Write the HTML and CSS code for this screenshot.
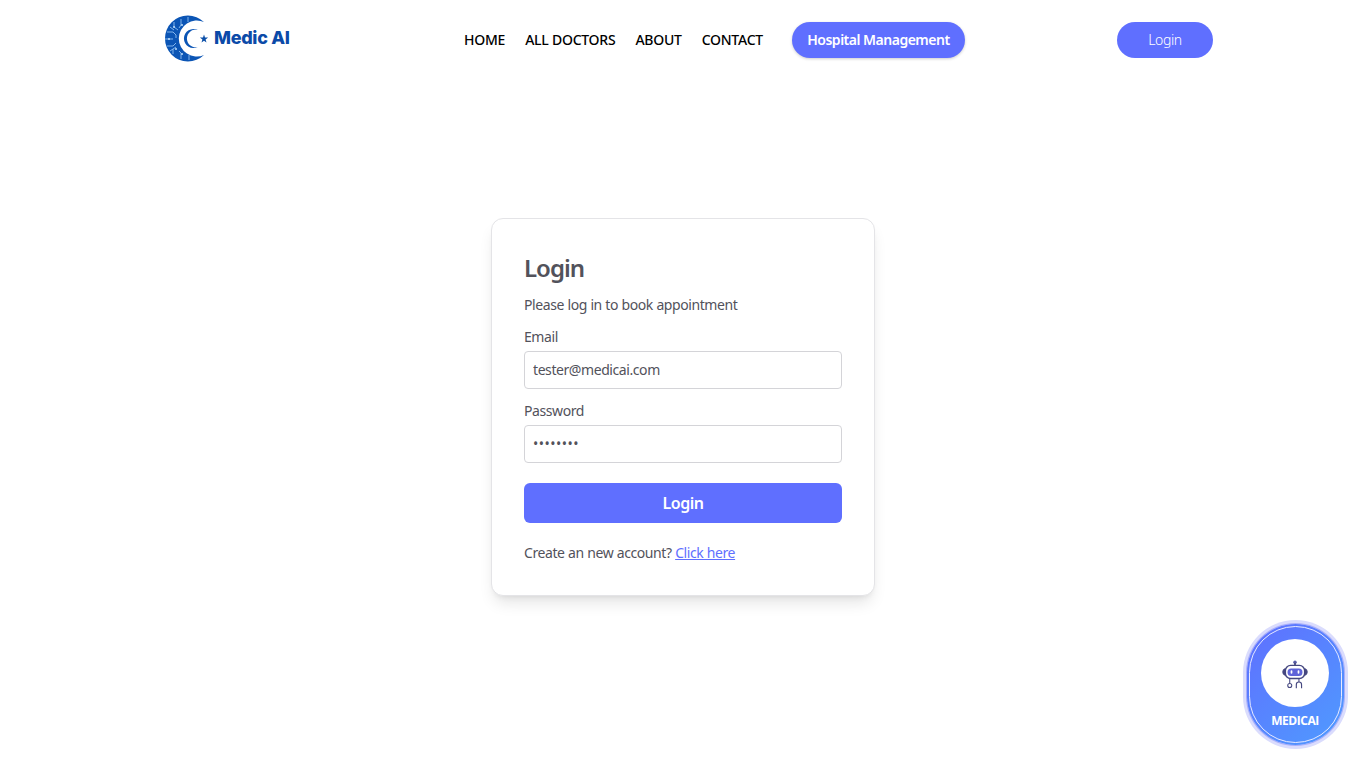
FILE: index.html
```html
<!DOCTYPE html>
<html lang="en">
<head>
<meta charset="utf-8">
<title>Medic AI</title>
<link rel="stylesheet" href="styles.css">
</head>
<body>
<header class="header">
  <a class="brand" href="#">
    <svg class="brand-mark" viewBox="0 0 46 46" width="46" height="46" aria-hidden="true">
      <path d="M40 6A23 23 0 1 0 40 39A18 18 0 1 1 40 6Z" fill="#0b55b5"/>
      <path d="M3 16h6l3 3v3M1 23h8M3 30h6l3-3M10 6v5l4 3M17 3v6l-2 3M9 38v-5l3-2M17 43v-6l-2-2M24 1v5M25 44v-5M6 11l4 3M6 35l3-2" stroke="#8fc0f2" stroke-width=".9" fill="none"/>
      <circle cx="10" cy="11" r="1" fill="#bcdcfa"/><circle cx="5" cy="23" r="1" fill="#bcdcfa"/><circle cx="12" cy="33" r="1" fill="#bcdcfa"/><circle cx="18" cy="9" r="1" fill="#bcdcfa"/><circle cx="18" cy="38" r="1" fill="#bcdcfa"/>
      <path d="M34 14A9.600 9.600 0 1 0 34 31A8.800 8.800 0 1 1 34 14Z" fill="#0b55b5"/>
      <path d="M40 18.500l1 3 3.100.1-2.500 1.900.9 3-2.500-1.800-2.500 1.800.9-3-2.500-1.900 3.100-.1z" fill="#0b4fa8"/>
    </svg>
    <span class="brand-name">Medic AI</span>
  </a>
  <nav class="nav">
    <a class="nav-link" href="#">HOME</a>
    <a class="nav-link" href="#">ALL DOCTORS</a>
    <a class="nav-link" href="#">ABOUT</a>
    <a class="nav-link" href="#">CONTACT</a>
    <a class="pill pill-strong" href="#">Hospital Management</a>
  </nav>
  <a class="pill pill-login" href="#">Login</a>
</header>
<main class="page">
  <form class="card">
    <h1 class="title">Login</h1>
    <p class="lead">Please log in to book appointment</p>
    <label class="field">
      <span>Email</span>
      <input type="email" value="tester@medicai.com">
    </label>
    <label class="field">
      <span>Password</span>
      <input class="secret" type="password" value="12345678">
    </label>
    <button class="submit" type="button">Login</button>
    <p class="switch">Create an new account? <a href="#">Click here</a></p>
  </form>
</main>
<aside class="bot">
  <div class="bot-inner">
    <div class="bot-line">
      <div class="bot-disc">
        <svg class="bot-icon" viewBox="0 0 32 34" width="28" height="30" aria-hidden="true">
          <circle cx="16" cy="2.500" r="2" fill="#5b5fa8"/>
          <path d="M16 3v3" stroke="#45477f" stroke-width="2"/>
          <rect x="5" y="6" width="22" height="15" rx="6" fill="#fff" stroke="#45477f" stroke-width="1.600"/>
          <rect x="7.500" y="9.500" width="17" height="8.500" rx="4" fill="#5f63d8"/>
          <rect x="11" y="11.500" width="2" height="4" rx="1" fill="#fff"/>
          <rect x="19" y="11.500" width="2" height="4" rx="1" fill="#fff"/>
          <path d="M5 9.500a4 4 0 0 0-3 4a4 4 0 0 0 3 4M27 9.500a4 4 0 0 1 3 4a4 4 0 0 1-3 4" fill="#45477f" stroke="#45477f"/>
          <path d="M10 21v5M12 21h8" stroke="#45477f" stroke-width="1.200" fill="none"/>
          <path d="M17.500 32v-4a3 3 0 0 1 6 0v4" stroke="#45477f" stroke-width="1.300" fill="none"/>
          <path d="M20.500 21v4" stroke="#45477f" stroke-width="1.200"/>
          <circle cx="10" cy="29" r="2.300" fill="#fff" stroke="#45477f" stroke-width="1.200"/>
        </svg>
      </div>
      <span class="bot-label">MEDICAI</span>
    </div>
  </div>
</aside>
</body>
</html>
```
FILE: styles.css
```css
* { box-sizing: border-box; }
html, body { margin: 0; padding: 0; height: 100%; }
body {
  background: #fff;
  font-family: "Noto Sans", "Open Sans", sans-serif;
  color: #000;
  overflow: hidden;
}
a { text-decoration: none; color: inherit; }

.header {
  display: flex;
  align-items: center;
  justify-content: space-between;
  height: 80px;
  margin: 0 153px 0 165px;
}
.brand { display: flex; align-items: center; gap: 4px; width: 147px; margin-top: -2px; }
.brand-mark { display: block; flex: none; overflow: visible; margin-left: -1px; }
.brand-name {
  font-family: Inter, sans-serif;
  font-size: 18px;
  font-weight: 800;
  color: #0b4aa8;
  letter-spacing: -0.3px;
  white-space: nowrap;
  margin-top: -3px;
}
.nav {
  display: flex;
  align-items: center;
  gap: 20px;
  font-size: 14px;
  font-weight: 500;
  letter-spacing: -0.25px;
}
.nav-link { margin-top: -2px; }
.pill {
  display: flex;
  align-items: center;
  justify-content: center;
  height: 36px;
  padding-bottom: 2px;
  border-radius: 18px;
  background: #5f6fff;
  color: #fff;
  font-size: 14px;
}
.pill-strong {
  width: 173px;
  margin-left: 9px;
  font-weight: 600;
  letter-spacing: -0.5px;
  box-shadow: 0 1px 3px rgba(0,0,0,.2);
}
.pill-login { width: 96px; font-weight: 300; letter-spacing: -0.35px; }

.page {
  display: flex;
  justify-content: center;
  padding-top: 138px;
}
.card {
  width: 384px;
  height: 378px;
  padding: 32px;
  background: #fff;
  border: 1px solid #e4e4e7;
  border-radius: 12px;
  box-shadow: 0 10px 15px -3px rgba(0,0,0,.1), 0 4px 6px -4px rgba(0,0,0,.1);
  color: #52525b;
  font-size: 14px;
  letter-spacing: -0.42px;
  word-spacing: 0.3px;
}
.title { margin: 0 0 11px; font-size: 24px; line-height: 33px; font-weight: 600; color: #52525b; letter-spacing: -1px; }
.lead { margin: 0 0 12px; line-height: 20px; }
.field { display: block; margin-bottom: 12px; }
.field span { display: block; line-height: 20px; margin-bottom: 4px; }
.field input {
  display: block;
  width: 100%;
  height: 38px;
  padding: 0 8px 1px;
  border: 1px solid #d4d4d8;
  border-radius: 4px;
  background: #fff;
  color: #52525b;
  font: inherit;
  letter-spacing: inherit;
  word-spacing: inherit;
  outline: none;
}
.field .secret { letter-spacing: 0.5px; }
.submit {
  display: block;
  width: 100%;
  height: 40px;
  margin-top: 20px;
  border: 0;
  border-radius: 6px;
  background: #5f6fff;
  color: #fff;
  font: 600 16px "Noto Sans", sans-serif;
  letter-spacing: -0.45px;
}
.switch { margin: 20px 0 0; line-height: 20px; }
.switch a { color: #5f6fff; text-decoration: underline; }

.bot {
  position: fixed;
  left: 1243px;
  top: 620px;
  width: 105px;
  height: 129px;
  padding: 4px;
  border-radius: 53px;
  background: #dadcfd;
}
.bot-inner {
  height: 100%;
  padding: 2px;
  border-radius: 49px;
  background: linear-gradient(135deg, #5f6fff, #4f9bff);
  box-shadow: 0 0 0 1px #a9aefb;
}
.bot-line {
  height: 100%;
  padding-top: 12px;
  display: flex;
  flex-direction: column;
  align-items: center;
  border: 1px solid #e6e9ff;
  border-radius: 47px;
}
.bot-disc {
  width: 68px;
  height: 68px;
  flex: none;
  margin-right: 1px;
  display: flex;
  align-items: center;
  justify-content: center;
  border-radius: 50%;
  background: #fff;
}
.bot-icon { display: block; margin-top: 3px; }
.bot-label { margin-top: 6px; margin-right: 1px; color: #fff; font-family: "Open Sans", sans-serif; font-size: 12px; font-weight: 700; letter-spacing: -0.45px; line-height: 16px; }
```
